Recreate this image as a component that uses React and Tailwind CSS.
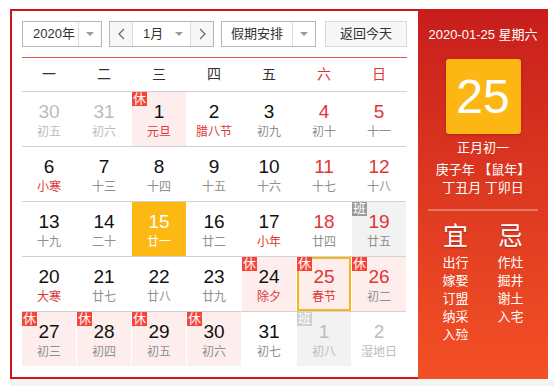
import React from "react";

const RED = "text-[#e13535]";

const rows = [
  [
    { n: 30, l: "初五", other: true },
    { n: 31, l: "初六", other: true },
    { n: 1, l: "元旦", rest: true, redL: true },
    { n: 2, l: "腊八节", redL: true },
    { n: 3, l: "初九" },
    { n: 4, l: "初十", redN: true },
    { n: 5, l: "十一", redN: true },
  ],
  [
    { n: 6, l: "小寒", redL: true },
    { n: 7, l: "十三" },
    { n: 8, l: "十四" },
    { n: 9, l: "十五" },
    { n: 10, l: "十六" },
    { n: 11, l: "十七", redN: true },
    { n: 12, l: "十八", redN: true },
  ],
  [
    { n: 13, l: "十九" },
    { n: 14, l: "二十" },
    { n: 15, l: "廿一", today: true },
    { n: 16, l: "廿二" },
    { n: 17, l: "小年", redL: true },
    { n: 18, l: "廿四", redN: true },
    { n: 19, l: "廿五", redN: true, work: true },
  ],
  [
    { n: 20, l: "大寒", redL: true },
    { n: 21, l: "廿七" },
    { n: 22, l: "廿八" },
    { n: 23, l: "廿九" },
    { n: 24, l: "除夕", rest: true, redL: true },
    { n: 25, l: "春节", rest: true, redN: true, redL: true, sel: true },
    { n: 26, l: "初二", rest: true, redN: true },
  ],
  [
    { n: 27, l: "初三", rest: true },
    { n: 28, l: "初四", rest: true },
    { n: 29, l: "初五", rest: true },
    { n: 30, l: "初六", rest: true },
    { n: 31, l: "初七" },
    { n: 1, l: "初八", other: true, work: true },
    { n: 2, l: "湿地日", other: true },
  ],
];

function Cell({ d }) {
  let bg = "bg-white";
  if (d.rest) bg = "bg-[#fdeeed]";
  if (d.work) bg = "bg-[#f2f2f2]";
  if (d.today) bg = "bg-[#fdb813]";
  let numC = "text-[#111]";
  let lunC = "text-[#8f8f8f]";
  if (d.redN) numC = RED;
  if (d.redL) lunC = RED;
  if (d.other) {
    numC = "text-[#bcbcbc]";
    lunC = "text-[#bcbcbc]";
  }
  if (d.today) {
    numC = "text-white";
    lunC = "text-white";
  }
  return (
    <div className={`relative h-[54px] ${bg} flex flex-col items-center pt-[10px]`}>
      {d.sel && (
        <div className="absolute inset-0 border-2 border-[#f7b519]" />
      )}
      {d.rest && (
        <div className="absolute left-0 top-0 w-[15px] h-[14px] bg-[#f5453a] text-white text-[13px] leading-[14px] flex items-center justify-center">
          休
        </div>
      )}
      {d.work && (
        <div
          className={`absolute left-0 top-0 w-[15px] h-[14px] ${
            d.other ? "bg-[#cfcfcf]" : "bg-[#9a9a9a]"
          } text-white text-[13px] leading-[14px] flex items-center justify-center`}
        >
          班
        </div>
      )}
      <div className={`relative text-[19px] leading-[20px] ${numC}`}>{d.n}</div>
      <div className={`relative mt-[2px] text-[12px] leading-[16px] ${lunC}`}>{d.l}</div>
    </div>
  );
}

function Tri() {
  return (
    <div className="w-0 h-0 border-x-[4px] border-x-transparent border-t-[4px] border-t-[#9a9a9a]" />
  );
}

function Chevron({ left }) {
  return (
    <svg width="7" height="12" viewBox="0 0 7 12">
      <polyline
        points={left ? "6,1 1,6 6,11" : "1,1 6,6 1,11"}
        fill="none"
        stroke="#666"
        strokeWidth="1.2"
      />
    </svg>
  );
}

export default function App() {
  const weekdays = ["一", "二", "三", "四", "五", "六", "日"];
  return (
    <div className="w-[554px] h-[386px] bg-white font-['Liberation_Sans','Noto_Sans_CJK_SC',sans-serif] overflow-hidden">
      <div className="pt-[9px] pl-[10px] flex">
        {/* left calendar */}
        <div className="w-[408px] h-[370px] border-2 border-r-0 border-[#c9171e] pl-[10px] pt-[10px]">
          {/* controls */}
          <div className="flex h-[26px] text-[13px] text-[#333]">
            <div className="w-[80px] border border-[#b5b5b5] flex">
              <div className="w-[55px] pl-[10px] flex items-center">2020年</div>
              <div className="flex-1 border-l border-[#dcdcdc] flex items-center justify-center">
                <Tri />
              </div>
            </div>
            <div className="ml-[7px] w-[105px] border border-[#b5b5b5] flex">
              <div className="w-[22px] bg-[#f7f7f7] flex items-center justify-center">
                <Chevron left />
              </div>
              <div className="w-[59px] border-x border-[#dcdcdc] flex items-center pl-[10px] pr-[7px]">
                <span>1月</span>
                <span className="ml-auto">
                  <Tri />
                </span>
              </div>
              <div className="flex-1 bg-[#f7f7f7] flex items-center justify-center">
                <Chevron />
              </div>
            </div>
            <div className="ml-[7px] w-[95px] border border-[#b5b5b5] flex">
              <div className="w-[70px] flex items-center justify-center">假期安排</div>
              <div className="flex-1 border-l border-[#dcdcdc] flex items-center justify-center">
                <Tri />
              </div>
            </div>
            <div className="ml-[9px] w-[82px] border border-[#dadada] bg-[#f7f7f7] flex items-center justify-center">
              返回今天
            </div>
          </div>
          <div className="mt-[10px] w-[385px] h-px bg-[#e5574e]" />
          <div className="grid grid-cols-[repeat(7,54px)] gap-x-px h-[33px] items-center text-[14px]">
            {weekdays.map((w, i) => (
              <div
                key={w}
                className={`text-center ${i >= 5 ? "text-[#e13535]" : "text-[#333]"}`}
              >
                {w}
              </div>
            ))}
          </div>
          <div className="w-[385px] h-px bg-[#d2d2d2]" />
          {rows.map((r, ri) => (
            <div key={ri}>
              <div className="grid grid-cols-[repeat(7,54px)] gap-x-px">
                {r.map((d, ci) => (
                  <Cell key={ci} d={d} />
                ))}
              </div>
              {ri < rows.length - 1 && <div className="w-[384px] h-px bg-[#d2d2d2]" />}
            </div>
          ))}
        </div>
        {/* right panel */}
        <div className="w-[130px] h-[370px] bg-linear-to-b from-[#c81d1c] to-[#f35026] flex flex-col items-center text-white pt-[17px]">
          <div className="text-[13px] leading-[18px]">2020-01-25 星期六</div>
          <div className="mt-[15px] w-[75px] h-[75px] rounded-[3px] bg-[#fcb714] shadow-[0_1px_3px_rgba(120,0,0,0.35)] flex items-center justify-center text-[48px] leading-none">
            25
          </div>
          <div className="mt-[5px] text-[13px] leading-[18px]">正月初一</div>
          <div className="mt-[4px] text-[13px] leading-[18px]">庚子年 【鼠年】</div>
          <div className="text-[13px] leading-[18px]">丁丑月 丁卯日</div>
          <div className="mt-[12px] w-[110px] h-[2px] bg-white/30" />
          <div className="mt-[11px] flex">
            <div className="w-[55px] flex flex-col items-center">
              <div className="text-[25px] leading-[28px] [text-shadow:0_1px_2px_rgba(100,0,0,0.4)]">宜</div>
              <div className="mt-[4px] text-[13px] leading-[18px] flex flex-col items-center">
                <span>出行</span>
                <span>嫁娶</span>
                <span>订盟</span>
                <span>纳采</span>
                <span>入殓</span>
              </div>
            </div>
            <div className="w-[55px] flex flex-col items-center">
              <div className="text-[25px] leading-[28px] [text-shadow:0_1px_2px_rgba(100,0,0,0.4)]">忌</div>
              <div className="mt-[4px] text-[13px] leading-[18px] flex flex-col items-center">
                <span>作灶</span>
                <span>掘井</span>
                <span>谢土</span>
                <span>入宅</span>
              </div>
            </div>
          </div>
        </div>
      </div>
      <div className="ml-[10px] h-[7px] bg-[#f4f4f4]" />
    </div>
  );
}
